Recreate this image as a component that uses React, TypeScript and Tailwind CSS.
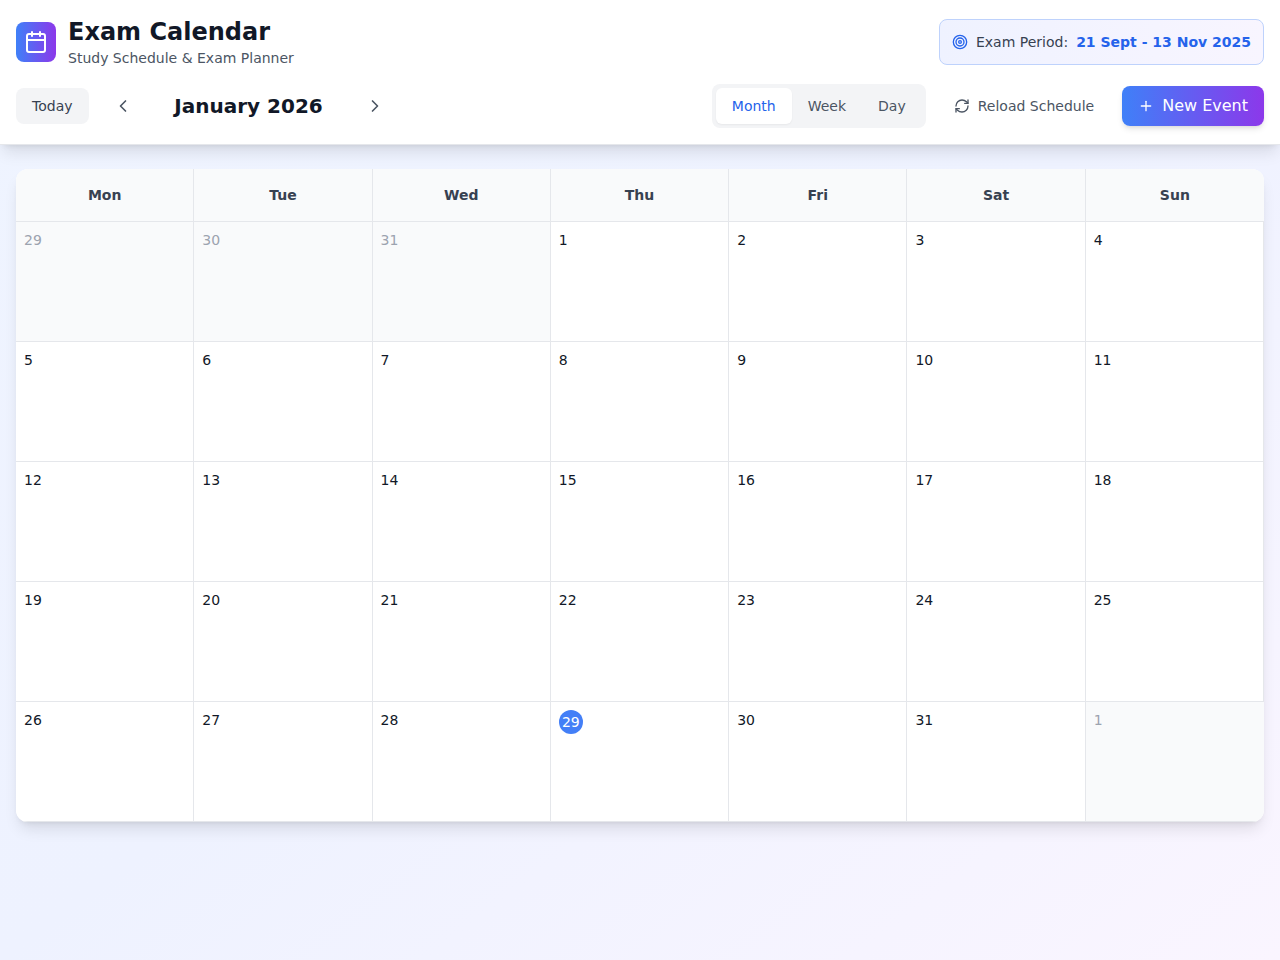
import { Calendar, ChevronLeft, ChevronRight, Plus, RefreshCw, Target } from "lucide-react";

const weekDays = ["Mon", "Tue", "Wed", "Thu", "Fri", "Sat", "Sun"];
const views = ["Month", "Week", "Day"];
const TODAY = 29;

type Cell = { day: number; inMonth: boolean };

const cells: Cell[] = [
  ...[29, 30, 31].map((day) => ({ day, inMonth: false })),
  ...Array.from({ length: 31 }, (_, i) => ({ day: i + 1, inMonth: true })),
  { day: 1, inMonth: false },
];

const weeks = Array.from({ length: 5 }, (_, i) => cells.slice(i * 7, i * 7 + 7));

function Header() {
  return (
    <header className="border-b border-gray-200 bg-white px-4 py-4 shadow-lg">
      <div className="mb-4 flex items-center justify-between">
        <div className="flex items-center gap-3">
          <div className="rounded-lg bg-linear-to-r/srgb from-[#3f80f8] to-[#8c38ea] p-2 text-white">
            <Calendar className="size-6" />
          </div>
          <div>
            <h1 className="text-2xl font-bold text-[#111827]">Exam Calendar</h1>
            <p className="text-sm text-[#4b5563]">Study Schedule &amp; Exam Planner</p>
          </div>
        </div>
        <div className="flex items-center gap-2 rounded-lg border border-[#bed2fc] bg-linear-to-r/srgb from-[#eff2ff] to-[#f8f5ff] px-3 py-3 text-sm">
          <Target className="size-4 text-[#2563eb]" />
          <span className="text-[#374151]">Exam Period:</span>
          <span className="font-semibold text-[#2563eb]">21 Sept - 13 Nov 2025</span>
        </div>
      </div>

      <div className="flex items-center justify-between">
        <div className="flex items-center gap-4">
          <button className="rounded-lg bg-[#f3f4f6] px-4 py-2 text-sm font-medium text-[#374151]">Today</button>
          <div className="flex items-center gap-2">
            <button aria-label="Previous month" className="rounded-lg p-2 text-[#4b5563]">
              <ChevronLeft className="size-5" />
            </button>
            <h2 className="min-w-[200px] text-center text-xl font-semibold text-[#111827]">January 2026</h2>
            <button aria-label="Next month" className="rounded-lg p-2 text-[#4b5563]">
              <ChevronRight className="size-5" />
            </button>
          </div>
        </div>
        <div className="flex items-center gap-3">
          <div className="flex rounded-lg bg-[#f3f4f6] p-1">
            {views.map((view) => (
              <button
                key={view}
                aria-pressed={view === "Month"}
                className={
                  view === "Month"
                    ? "rounded-md bg-white px-4 py-2 text-sm font-medium text-[#2563eb] shadow-xs"
                    : "rounded-md px-4 py-2 text-sm font-medium text-[#4b5563]"
                }
              >
                {view}
              </button>
            ))}
          </div>
          <button className="flex items-center gap-2 rounded-lg px-4 py-2 text-sm text-[#4b5563]">
            <RefreshCw className="size-4" />
            Reload Schedule
          </button>
          <button className="flex items-center gap-2 rounded-lg bg-linear-to-r/srgb from-[#3f80f8] to-[#8c38ea] px-4 py-2 text-white shadow-md">
            <Plus className="size-4" />
            New Event
          </button>
        </div>
      </div>
    </header>
  );
}

function dayClass(inMonth: boolean) {
  return inMonth
    ? "h-[120px] border-r border-b border-gray-200 bg-white p-2 align-top text-sm text-[#111827]"
    : "h-[120px] border-r border-b border-gray-200 bg-[#f9fafb] p-2 align-top text-sm text-[#9ca3af] last:border-r-0";
}

function MonthGrid() {
  return (
    <div className="overflow-hidden rounded-xl bg-white shadow-lg">
      <table className="w-full table-fixed border-separate border-spacing-0">
        <thead>
          <tr>
            {weekDays.map((day) => (
              <th
                key={day}
                scope="col"
                className="border-r border-b border-gray-200 bg-[#f9fafb] p-4 text-center text-sm font-semibold text-[#374151] last:border-r-0"
              >
                {day}
              </th>
            ))}
          </tr>
        </thead>
        <tbody>
          {weeks.map((week, index) => (
            <tr key={index}>
              {week.map(({ day, inMonth }) => (
                <td key={day} className={dayClass(inMonth)}>
                  {inMonth && day === TODAY ? (
                    <span className="flex size-6 items-center justify-center rounded-full bg-[#437ff7] text-white">
                      {day}
                    </span>
                  ) : (
                    day
                  )}
                </td>
              ))}
            </tr>
          ))}
        </tbody>
      </table>
    </div>
  );
}

export default function App() {
  return (
    <div className="min-h-screen bg-linear-to-br/srgb from-[#eff4ff] via-[#eef2ff] to-[#faf5ff] font-['DejaVu_Sans',sans-serif]">
      <Header />
      <main className="px-4 py-6">
        <MonthGrid />
      </main>
    </div>
  );
}
